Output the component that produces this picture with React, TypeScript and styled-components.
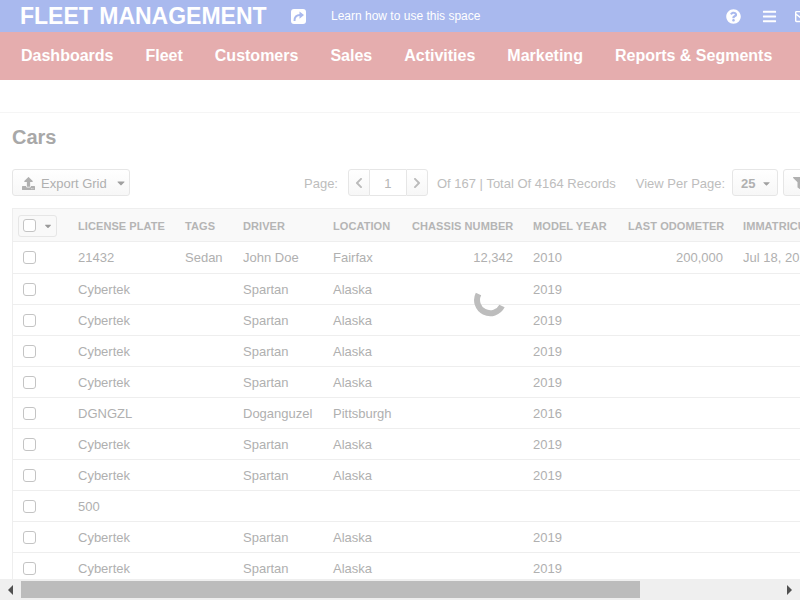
import React from "react";
import styled, { createGlobalStyle } from "styled-components";
import { FaBars, FaCaretDown, FaChevronLeft, FaChevronRight, FaFilter, FaQuestionCircle, FaRegEnvelope, FaUpload } from "react-icons/fa";

const Global = createGlobalStyle`
  html, body { margin: 0; padding: 0; height: 100%; overflow: hidden; background: #fff; }
  body { font-family: "Liberation Sans", Arial, sans-serif; }
  * { box-sizing: border-box; }
`;

const Page = styled.div`
  width: 800px; height: 600px; display: flex; flex-direction: column; overflow: hidden; position: relative;
`;
const TopBar = styled.header`
  height: 32px; flex: none; background: #a9b9ee; color: #fff; display: flex; align-items: center; padding-left: 20px; white-space: nowrap;
`;
const Brand = styled.div`
  font-size: 23px; font-weight: 700; width: 271px; flex: none;
`;
const ShareIcon = styled.svg`
  width: 15px; height: 15px; flex: none;
`;
const Learn = styled.span`
  font-size: 12px; margin-left: 25px; width: 395px; flex: none;
`;
const TopIcons = styled.div`
  display: flex; align-items: center; gap: 21px; flex: none;
  svg { width: 15px; height: 15px; flex: none; }
`;
const Envelope = styled(FaRegEnvelope)`
  margin-left: -3px;
`;
const Nav = styled.nav`
  height: 48px; flex: none; background: #e5adae; color: #fff; display: flex; align-items: center; padding-left: 21px; gap: 32px; white-space: nowrap;
  font-size: 16px; font-weight: 700;
`;
const Spacer = styled.div`
  height: 33px; flex: none; border-bottom: 1px solid #f5f5f5;
`;
const Content = styled.main`
  flex: 1; min-height: 0; padding: 12px 0 0 12px; overflow: hidden; position: relative;
`;
const Title = styled.h1`
  margin: 0; font-size: 20px; line-height: 24px; font-weight: 700; color: #a8a8a8;
`;
const Toolbar = styled.div`
  display: flex; align-items: center; margin-top: 20px; height: 27px; white-space: nowrap; color: #bdbdbd; font-size: 13px; width: 830px;
`;
const Btn = styled.div<{ $w: number }>`
  width: ${p => p.$w}px; height: 27px; flex: none; display: flex; align-items: center; padding: 1px 0 0 9px; gap: 6px;
  border: 1px solid #e6e6e6; border-radius: 3px; background: linear-gradient(#fff, #f7f7f7); color: #b0b0b0; font-size: 13px;
`;
const Caret = styled(FaCaretDown)`
  margin-left: 2px; flex: none; color: #a0a0a0;
`;
const ValueCaret = styled(FaCaretDown)`
  margin-left: -1px; flex: none; color: #a0a0a0;
`;
const BoldValue = styled.span`
  font-weight: 700; margin-left: -1px;
`;
const Label = styled.span<{ $ml: number }>`
  margin-left: ${p => p.$ml}px; padding-top: 1px; color: #bdbdbd; font-size: 13px; flex: none;
`;
const Pager = styled.div<{ $ml: number; $mr: number }>`
  display: flex; height: 27px; margin: 0 ${p => p.$mr}px 0 ${p => p.$ml}px; flex: none;
`;
const PagerBtn = styled.div`
  width: 22px; display: flex; align-items: center; justify-content: center; border: 1px solid #e6e6e6; background: linear-gradient(#fff, #f7f7f7); color: #bbb;
  &:first-child { border-radius: 3px 0 0 3px; }
  &:last-child { border-radius: 0 3px 3px 0; }
  svg { width: 12px; height: 12px; }
`;
const PagerInput = styled.div`
  width: 36px; display: flex; align-items: center; justify-content: center; padding-top: 1px; border-top: 1px solid #e6e6e6; border-bottom: 1px solid #e6e6e6; color: #b5b5b5; font-size: 13px;
`;
const Grid = styled.table`
  border-collapse: separate; border-spacing: 0; table-layout: fixed; width: 860px; margin-top: 12px; font-size: 13px; color: #b0b0b0;
  border-left: 1px solid #eee; border-top: 1px solid #eee;
`;
const Th = styled.th<{ $w: number; $right?: boolean }>`
  width: ${p => p.$w}px; height: 33px; padding: 1px 10px 0; background: #f9f9f9; border-bottom: 1px solid #eee; font-size: 11px; font-weight: 700;
  color: #b5b5b5; text-align: ${p => (p.$right ? "right" : "left")}; white-space: nowrap; overflow: hidden; letter-spacing: .08px;
`;
const Tr = styled.tr<{ $first?: boolean }>`
  height: ${p => (p.$first ? 32 : 31)}px;
`;
const Td = styled.td<{ $right?: boolean }>`
  padding: 0 10px; border-bottom: 1px solid #eee; text-align: ${p => (p.$right ? "right" : "left")}; white-space: nowrap; overflow: hidden;
`;
const Check = styled.span`
  display: block; width: 13px; height: 13px; border: 1px solid #c4c4c4; border-radius: 3px; background: #fff;
`;
const CheckMenu = styled.div`
  width: 39px; height: 22px; margin-left: -5px; display: flex; align-items: center; gap: 7px; padding-left: 4px; border: 1px solid #e6e6e6; border-radius: 3px; color: #999;
  svg { width: 10px; height: 10px; }
`;
const Spinner = styled.svg`
  position: absolute; left: 474px; top: 283px; width: 34px; height: 34px;
`;
const ScrollBar = styled.div`
  height: 21px; flex: none; background: #efefef; display: flex; align-items: center; position: relative;
`;
const Arrow = styled.svg`
  width: 21px; height: 20px; flex: none; fill: #505050;
`;
const Track = styled.div`
  flex: 1; height: 17px;
`;
const Thumb = styled.div`
  width: 619px; height: 17px; background: #bcbcbc;
`;

const cols: [string, number, boolean?][] = [
  ["LICENSE PLATE", 107], ["TAGS", 58], ["DRIVER", 90], ["LOCATION", 79], ["CHASSIS NUMBER", 121, true],
  ["MODEL YEAR", 95], ["LAST ODOMETER", 115, true], ["IMMATRICULATION DATE", 140],
];
const c = ["Cybertek", "", "Spartan", "Alaska", "", "2019", "", ""];
const rows: string[][] = [
  ["21432", "Sedan", "John Doe", "Fairfax", "12,342", "2010", "200,000", "Jul 18, 2019"],
  c, c, c, c,
  ["DGNGZL", "", "Doganguzel", "Pittsburgh", "", "2016", "", ""],
  c, c,
  ["500", "", "", "", "", "", "", ""],
  c, c, c,
];

export default function App() {
  return (
    <Page>
      <Global />
      <TopBar>
        <Brand>FLEET MANAGEMENT</Brand>
        <ShareIcon viewBox="0 0 15 15">
          <rect width="15" height="15" rx="3" fill="#fff" />
          <path d="M3.5 12 C3.3 8 5.5 6 9 6" fill="none" stroke="#a9b9ee" strokeWidth="2" />
          <path d="M8.5 2.5 L13 6 L8.5 9.8z" fill="#a9b9ee" />
        </ShareIcon>
        <Learn>Learn how to use this space</Learn>
        <TopIcons><FaQuestionCircle /><FaBars /><Envelope /></TopIcons>
      </TopBar>
      <Nav>
        {["Dashboards", "Fleet", "Customers", "Sales", "Activities", "Marketing", "Reports & Segments"].map(n => <span key={n}>{n}</span>)}
      </Nav>
      <Spacer />
      <Content>
        <Title>Cars</Title>
        <Toolbar>
          <Btn $w={118}><FaUpload size={13} />Export Grid<Caret size={12} /></Btn>
          <Label $ml={174}>Page:</Label>
          <Pager $ml={10} $mr={9}>
            <PagerBtn><FaChevronLeft /></PagerBtn>
            <PagerInput>1</PagerInput>
            <PagerBtn><FaChevronRight /></PagerBtn>
          </Pager>
          <Label $ml={0}>Of 167 | Total Of 4164 Records</Label>
          <Label $ml={20}>View Per Page:</Label>
          <Pager $ml={7} $mr={5}><Btn $w={46}><BoldValue>25</BoldValue><ValueCaret size={11} /></Btn></Pager>
          <Btn $w={40}><FaFilter size={12} /></Btn>
        </Toolbar>
        <Grid>
          <thead>
            <tr>
              <Th $w={55}><CheckMenu><Check /><FaCaretDown /></CheckMenu></Th>
              {cols.map(([t, w, r]) => <Th key={t} $w={w} $right={r}>{t}</Th>)}
            </tr>
          </thead>
          <tbody>
            {rows.map((r, i) => (
              <Tr key={i} $first={i === 0}>
                <Td><Check /></Td>
                {r.map((v, j) => <Td key={j} $right={cols[j][2]}>{v}</Td>)}
              </Tr>
            ))}
          </tbody>
        </Grid>
      </Content>
      <Spinner viewBox="0 0 34 34"><path d="M4.5 11 A13 13 0 0 0 28 23" fill="none" stroke="#bdbdbd" strokeWidth="6" /></Spinner>
      <ScrollBar>
        <Arrow viewBox="0 0 21 20"><path d="M8 10l5-5v10z" /></Arrow>
        <Track><Thumb /></Track>
        <Arrow viewBox="0 0 21 20"><path d="M8 5l5 5-5 5z" /></Arrow>
      </ScrollBar>
    </Page>
  );
}
